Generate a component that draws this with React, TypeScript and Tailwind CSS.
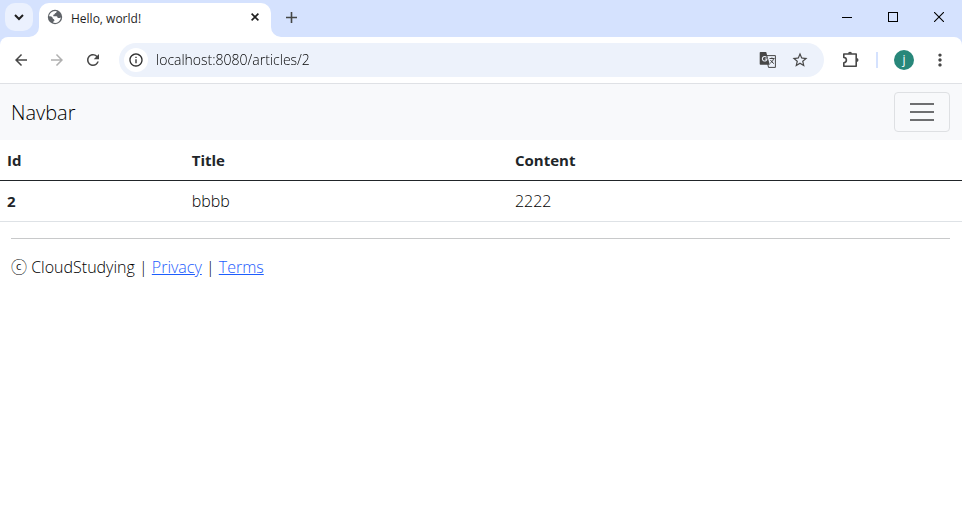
import React from "react";
import { MdArrowBack, MdArrowForward, MdInfoOutline, MdMoreVert, MdRefresh, MdStarBorder } from "react-icons/md";

function TabStrip() {
  return (
    <div className="flex h-[37px] items-start bg-[#d5e2fe] pl-[5px]">
      <button aria-label="Search tabs" className="mt-[3px] flex size-7 items-center justify-center rounded-[10px] bg-[#ebf1fe]">
        <svg width="10" height="8" viewBox="0 0 10 8" fill="none" stroke="#1f1f1f" strokeWidth="2">
          <path d="M1 2l4 4 4-4" />
        </svg>
      </button>
      <div className="relative mt-[3px] ml-1.5 flex h-[34px] w-[232px] items-center rounded-t-[10px] bg-white pr-3 pb-1.5 pl-2">
        <svg className="absolute bottom-0 -left-2.5" width="10" height="10" viewBox="0 0 10 10">
          <path d="M10 0v10H0A10 10 0 0 0 10 0z" fill="#fff" />
        </svg>
        <svg className="absolute -right-2.5 bottom-0" width="10" height="10" viewBox="0 0 10 10">
          <path d="M0 0v10h10A10 10 0 0 1 0 0z" fill="#fff" />
        </svg>
        <svg width="16" height="16" viewBox="0 0 16 16">
          <circle cx="8" cy="8" r="7.2" fill="#5f6368" />
          <path d="M2 7.2C2.200 5 4 2.800 6.500 2.200L9.500 2c.4 1.200-.3 2-1.500 2.200-.3 1-1 1.500-1.800 1.500l.2 1.500h3c1 .2 1.300 1 1.300 1.900h1.900c.5 0 1-.6 1.300-1.100C13.800 11 12 13.300 9 13.900l-2.500-.1c-.6-.8-.3-1.800.9-1.900.2-1.200-.5-2-1.500-2.200-.2-1.500-1.200-2.400-2.600-2.500z" fill="#fff" />
        </svg>
        <span className="ml-2 grow pt-1 text-xs font-normal text-[#1f1f1f]">Hello, world!</span>
        <button aria-label="Close tab">
          <svg width="8" height="8" viewBox="0 0 8 8" stroke="#1f1f1f" strokeWidth="1.6">
            <path d="M.6.6l6.800 6.800M7.400.6L.6 7.400" />
          </svg>
        </button>
      </div>
      <button aria-label="New tab" className="mt-[11px] ml-3.5 flex size-3 items-center justify-center">
        <svg width="11" height="11" viewBox="0 0 11 11" stroke="#454746" strokeWidth="1.6">
          <path d="M5.5 0v11M0 5.5h11" />
        </svg>
      </button>
      <div className="ml-auto flex">
        <button aria-label="Minimize" className="flex h-[34px] w-[46px] items-center justify-center">
          <svg width="11" height="11" viewBox="0 0 11 11" stroke="#000" shapeRendering="crispEdges">
            <path d="M0 5.5h10" />
          </svg>
        </button>
        <button aria-label="Maximize" className="flex h-[34px] w-[46px] items-center justify-center">
          <svg width="10" height="10" viewBox="0 0 10 10" fill="none" stroke="#000" shapeRendering="crispEdges">
            <path d="M.5.5h9v9h-9z" />
          </svg>
        </button>
        <button aria-label="Close" className="flex h-[34px] w-[46px] items-center justify-center">
          <svg width="10" height="10" viewBox="0 0 10 10" stroke="#000" strokeWidth="1.1">
            <path d="M0 0l10 10M10 0L0 10" />
          </svg>
        </button>
      </div>
    </div>
  );
}

function TranslateIcon() {
  return (
    <svg width="18" height="18" viewBox="0 0 18 18" fill="none">
      <path d="M7 4.600h9.400v11.800H9.500z" stroke="#474747" strokeWidth="1" />
      <path d="M1.500 1h5.700l3.600 12.800H1.500a.8.8 0 0 1-.8-.8V1.800a.8.8 0 0 1 .8-.8z" fill="#474747" />
      <path d="M7.500 6.300A2.300 2.300 0 1 0 8 8H5.800" stroke="#edf2fb" strokeWidth="1.100" />
      <path d="M10.500 7.500h5M12.900 6.500v1M14.600 7.500c-.4 2-1.700 3.600-3.400 4.700M11.500 9c.7 1.500 1.900 2.700 3.400 3.600" stroke="#474747" strokeWidth="1" />
    </svg>
  );
}

function Toolbar() {
  return (
    <div className="bg-[#d5e2fe]">
      <div className="flex h-[47px] items-center rounded-t-lg border-b border-[#dfe1e5] bg-white pr-[13px] pl-3 text-[#474747]">
        <button aria-label="Back"><MdArrowBack className="size-[18px]" /></button>
        <button aria-label="Forward" className="ml-[18px] text-[#b0b0b0]"><MdArrowForward className="size-[18px]" /></button>
        <button aria-label="Reload" className="ml-[18px]"><MdRefresh className="size-[18px]" /></button>
        <div className="ml-[17px] flex h-[34px] grow items-center rounded-full bg-[#edf2fb] pr-[15px] pl-[5px]">
          <button aria-label="View site information" className="flex size-6 items-center justify-center rounded-full bg-white text-[#303030]">
            <MdInfoOutline className="size-4" />
          </button>
          <input
            aria-label="Address"
            defaultValue="localhost:8080/articles/2"
            className="ml-2 min-w-0 grow bg-linear-to-r from-black from-60px to-[#383838] to-60px bg-clip-text text-sm text-transparent outline-none"
          />
          <button aria-label="Translate this page"><TranslateIcon /></button>
          <button aria-label="Bookmark this tab" className="ml-3.5"><MdStarBorder className="size-[18px]" /></button>
        </div>
        <button aria-label="Extensions" className="ml-[18px]">
          <svg width="18" height="18" viewBox="0 0 18 18" fill="none" stroke="currentColor" strokeWidth="1.6" strokeLinejoin="round">
            <path d="M1.8 3h12.4v12.2H1.8v-3.5a2.6 2.6 0 0 0 0-5.2z" />
            <path d="M6 2.8a2 2 0 0 1 4 0zM14.5 7a2 2 0 0 1 0 4z" fill="currentColor" stroke="none" />
          </svg>
        </button>
        <span className="ml-4 h-4 w-0.5 bg-[#d5e2fe]" />
        <button aria-label="Profile" className="ml-4 flex size-5 items-center justify-center rounded-full bg-[#28877a] text-xs font-normal text-white">j</button>
        <button aria-label="Menu" className="ml-[17px]"><MdMoreVert className="size-[18px] scale-110" /></button>
      </div>
    </div>
  );
}

export default function App() {
  return (
    <div className="min-h-screen bg-white font-['Open_Sans','Noto_Sans_CJK_KR',sans-serif] text-base font-light text-black">
      <TabStrip />
      <Toolbar />
      <nav className="flex h-14 items-center justify-between bg-[#f8f9fb] pr-3 pl-[11px]">
        <a href="#" className="pt-0.5 text-xl">Navbar</a>
        <button aria-label="Toggle navigation" className="flex h-10 w-14 items-center justify-center rounded-sm border border-[#dee0e3]">
          <svg width="30" height="30" viewBox="0 0 30 30" stroke="#6e6f71" strokeWidth="2">
            <path d="M3 7h24M3 15h24M3 23h24" />
          </svg>
        </button>
      </nav>
      <table className="w-full table-fixed border-separate border-spacing-0 text-left">
        <colgroup>
          <col className="w-[19.1%]" />
          <col className="w-[33.6%]" />
          <col />
        </colgroup>
        <thead>
          <tr className="h-[41px] text-[15px] font-bold text-[#212529]">
            <th scope="col" className="border-b border-[#212529] px-[7px]">Id</th>
            <th scope="col" className="border-b border-[#212529] px-2">Title</th>
            <th scope="col" className="border-b border-[#212529] px-2">Content</th>
          </tr>
        </thead>
        <tbody>
          <tr className="h-[41px]">
            <th scope="row" className="border-b border-[#dee2e6] px-[7px] text-[15px] font-bold text-[#212529]">2</th>
            <td className="border-b border-[#dee2e6] px-2">bbbb</td>
            <td className="border-b border-[#dee2e6] px-2">2222</td>
          </tr>
        </tbody>
      </table>
      <footer className="pt-4 pr-3 pl-[11px]">
        <hr className="mb-4 border-[#c8c9ca]" />
        <p>
          ⓒ CloudStudying | <a href="#" className="text-[#1d5dfd] underline">Privacy</a> | <a href="#" className="text-[#1d5dfd] underline">Terms</a>
        </p>
      </footer>
    </div>
  );
}
